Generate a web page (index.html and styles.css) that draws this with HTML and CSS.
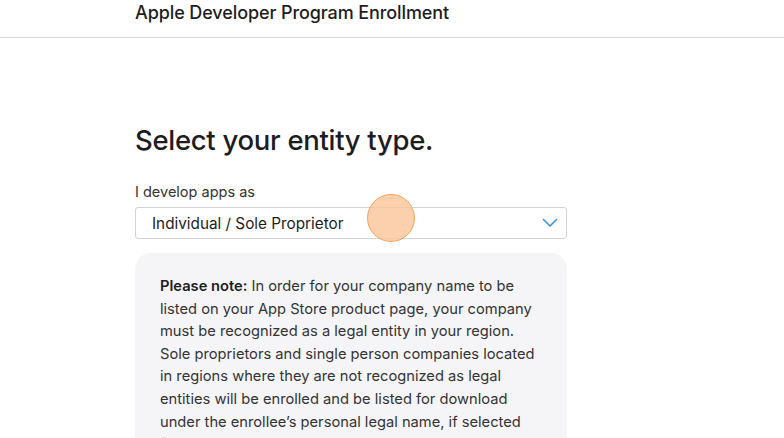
FILE: index.html
```html
<!DOCTYPE html>
<html>
<head>
<meta charset="utf-8">
<link rel="stylesheet" href="styles.css">
</head>
<body>
<header class="topbar">
  <div class="topbar-inner">Apple Developer Program Enrollment</div>
</header>
<main class="content">
  <h1 class="title">Select your entity type.</h1>
  <label class="label">I develop apps as</label>
  <div class="select">
    <span class="select-value">Individual / Sole Proprietor</span>
    <svg class="chevron" width="16" height="10" viewBox="0 0 16 10"><path d="M1.5 1.5 L8 8 L14.5 1.5" fill="none" stroke="#3b8ed6" stroke-width="1.6" stroke-linecap="round" stroke-linejoin="round"/></svg>
    <span class="touch"></span>
  </div>
  <div class="note">
    <p><strong>Please note:</strong> In order for your company name to be listed on your App Store product page, your company must be recognized as a legal entity in your region. Sole proprietors and single person companies located in regions where they are not recognized as legal entities will be enrolled and be listed for download under the enrollee’s personal legal name, if selected for distribution on the App Store.</p>
  </div>
</main>
</body>
</html>
```
FILE: styles.css
```css
html, body { margin: 0; padding: 0; background: #fff; overflow: hidden; }
body { font-family: Inter, "Noto Sans", sans-serif; color: #1d1d1f; width: 784px; height: 438px; }
.topbar { height: 37px; border-bottom: 1px solid #d8d8d8; }
.topbar-inner { padding-left: 135px; padding-top: 2px; font-size: 18px; font-weight: 500; line-height: 22px; color: #1d1d1f; letter-spacing: -0.1px; }
.content { width: 432px; margin-left: 135px; padding-top: 84px; }
.title { margin: 0; font-size: 27.5px; font-weight: 500; line-height: 36px; letter-spacing: -0.3px; color: #1d1d1f; }
.label { display: block; margin-top: 25px; font-size: 14.5px; line-height: 18px; color: #333; }
.select { position: relative; margin-top: 6px; height: 30px; border: 1px solid #d2d2d7; border-radius: 3px; display: flex; align-items: center; justify-content: space-between; padding: 0 8px 0 16px; }
.select-value { font-size: 15.3px; color: #1d1d1f; }
.chevron { display: block; }
.touch { position: absolute; left: 231px; top: -14px; width: 48px; height: 48px; border-radius: 50%; background: rgba(252, 200, 158, 0.85); border: 1.5px solid #f6a55a; box-sizing: border-box; }
.note { margin-top: 14px; background: #f5f5f7; border-radius: 16px; padding: 22px 25px 20px 25px; }
.note p { margin: 0; font-size: 14.7px; line-height: 22.6px; color: #333336; }
.note strong { font-weight: 600; color: #1d1d1f; }
```
